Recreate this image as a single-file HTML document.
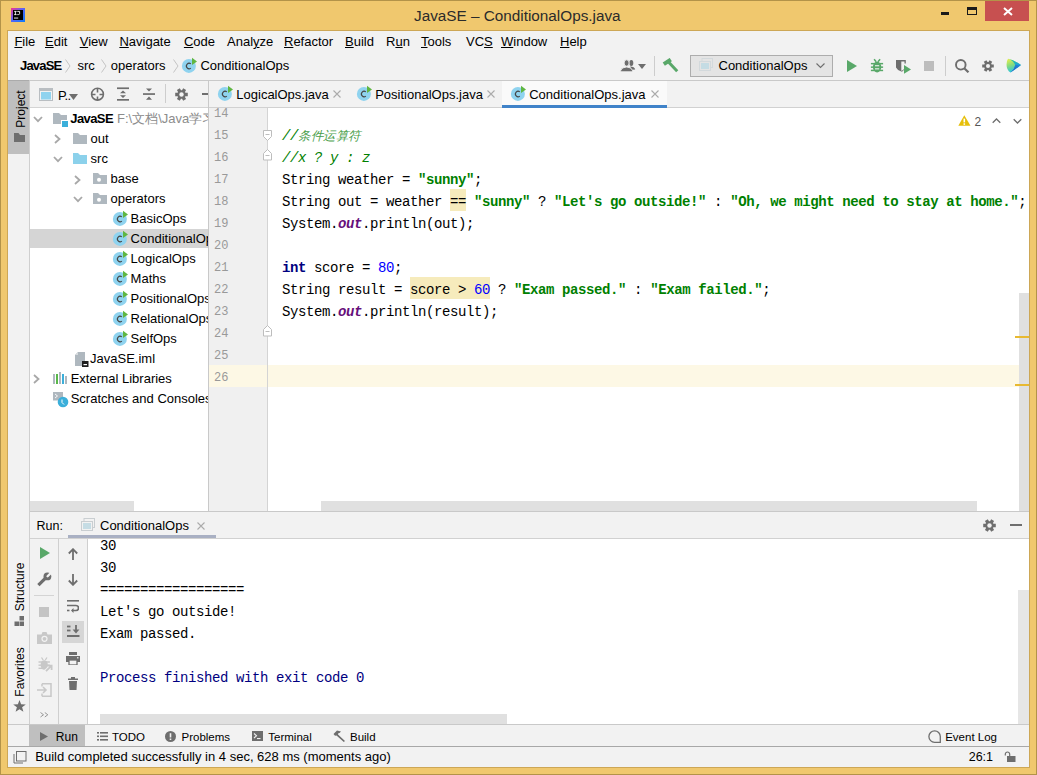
<!DOCTYPE html>
<html><head><meta charset="utf-8"><title>JavaSE – ConditionalOps.java</title>
<style>
html,body{margin:0;padding:0;}
body{width:1037px;height:775px;position:relative;overflow:hidden;font-family:'Liberation Sans', sans-serif;}
.a{position:absolute;}
.t{white-space:pre;}
u{text-decoration:underline;text-underline-offset:1px;}
</style></head><body>
<div class="a" style="left:0;top:0;width:1037px;height:775px;background:#F0C86E;"></div>
<div class="a" style="left:0px;top:0px;width:1037px;height:1px;background:#B39349"></div>
<div class="a" style="left:0px;top:0px;width:1px;height:775px;background:#B39349"></div>
<div class="a" style="left:1036px;top:0px;width:1px;height:775px;background:#B39349"></div>
<div class="a" style="left:0px;top:774px;width:1037px;height:1px;background:#B39349"></div>
<div class="a" style="left:7px;top:30px;width:1023px;height:738px;border:1px solid #CDA756;box-sizing:border-box"></div>
<div class="a" style="left:8px;top:31px;width:1021px;height:736px;background:#F2F2F2"></div>
<svg class="a" style="left:11px;top:8px;" width="14" height="14" viewBox="0 0 14 14"><defs><linearGradient id="ijg" x1="0" y1="0" x2="1" y2="1">
<stop offset="0" stop-color="#FC318C"/><stop offset="0.45" stop-color="#5A63F5"/><stop offset="1" stop-color="#087CFA"/></linearGradient></defs>
<rect x="0" y="0" width="14" height="14" fill="url(#ijg)"/><rect x="2" y="2" width="10" height="10" fill="#000"/>
<path d="M3.2 3.4 H5.6 M4.4 3.4 V6.6 M3.2 6.6 H5.6" stroke="#fff" stroke-width="0.9" fill="none"/>
<path d="M6.3 3.4 H8.6 V5.6 Q8.6 6.6 7.4 6.6 H6.3" stroke="#fff" stroke-width="0.9" fill="none"/>
<rect x="3" y="9.6" width="4.2" height="0.9" fill="#fff"/></svg>
<div class="a t" style="left:414px;top:5.50px;font-size:15.3px;line-height:20px;color:#2B2B2B;font-weight:400;font-family:'Liberation Sans', sans-serif;">JavaSE – ConditionalOps.java</div>
<div class="a" style="left:941px;top:12px;width:8px;height:3px;background:#1A1A1A"></div>
<div class="a" style="left:967px;top:7px;width:10px;height:8px;border:1px solid #1A1A1A;border-top:3px solid #1A1A1A;box-sizing:border-box"></div>
<div class="a" style="left:985px;top:1px;width:44px;height:20px;background:#C75050"></div>
<svg class="a" style="left:1003px;top:7px;" width="10" height="9" viewBox="0 0 10 9"><path d="M1 1 L9 8 M9 1 L1 8" stroke="#fff" stroke-width="2"/></svg>
<div class="a t" style="left:14.4px;top:32.00px;font-size:13px;line-height:20px;color:#000;font-weight:400;font-family:'Liberation Sans', sans-serif;"><u>F</u>ile</div>
<div class="a t" style="left:45px;top:32.00px;font-size:13px;line-height:20px;color:#000;font-weight:400;font-family:'Liberation Sans', sans-serif;"><u>E</u>dit</div>
<div class="a t" style="left:79.7px;top:32.00px;font-size:13px;line-height:20px;color:#000;font-weight:400;font-family:'Liberation Sans', sans-serif;"><u>V</u>iew</div>
<div class="a t" style="left:119.4px;top:32.00px;font-size:13px;line-height:20px;color:#000;font-weight:400;font-family:'Liberation Sans', sans-serif;"><u>N</u>avigate</div>
<div class="a t" style="left:183.9px;top:32.00px;font-size:13px;line-height:20px;color:#000;font-weight:400;font-family:'Liberation Sans', sans-serif;"><u>C</u>ode</div>
<div class="a t" style="left:227px;top:32.00px;font-size:13px;line-height:20px;color:#000;font-weight:400;font-family:'Liberation Sans', sans-serif;">Anal<u>y</u>ze</div>
<div class="a t" style="left:284px;top:32.00px;font-size:13px;line-height:20px;color:#000;font-weight:400;font-family:'Liberation Sans', sans-serif;"><u>R</u>efactor</div>
<div class="a t" style="left:345px;top:32.00px;font-size:13px;line-height:20px;color:#000;font-weight:400;font-family:'Liberation Sans', sans-serif;"><u>B</u>uild</div>
<div class="a t" style="left:386px;top:32.00px;font-size:13px;line-height:20px;color:#000;font-weight:400;font-family:'Liberation Sans', sans-serif;">R<u>u</u>n</div>
<div class="a t" style="left:421px;top:32.00px;font-size:13px;line-height:20px;color:#000;font-weight:400;font-family:'Liberation Sans', sans-serif;"><u>T</u>ools</div>
<div class="a t" style="left:466px;top:32.00px;font-size:13px;line-height:20px;color:#000;font-weight:400;font-family:'Liberation Sans', sans-serif;">VC<u>S</u></div>
<div class="a t" style="left:501px;top:32.00px;font-size:13px;line-height:20px;color:#000;font-weight:400;font-family:'Liberation Sans', sans-serif;"><u>W</u>indow</div>
<div class="a t" style="left:560px;top:32.00px;font-size:13px;line-height:20px;color:#000;font-weight:400;font-family:'Liberation Sans', sans-serif;"><u>H</u>elp</div>
<div class="a t" style="left:20px;top:56.00px;font-size:13px;line-height:20px;color:#000;font-weight:700;font-family:'Liberation Sans', sans-serif;letter-spacing:-0.8px">JavaSE</div>
<svg class="a" style="left:65px;top:59px;" width="6" height="14" viewBox="0 0 6 14"><path d="M0.5 0.5 L5 7.0 L0.5 13.5" stroke="#C4C4C4" stroke-width="1" fill="none"/></svg>
<div class="a t" style="left:77.4px;top:56.00px;font-size:13px;line-height:20px;color:#000;font-weight:400;font-family:'Liberation Sans', sans-serif;">src</div>
<svg class="a" style="left:101px;top:59px;" width="6" height="14" viewBox="0 0 6 14"><path d="M0.5 0.5 L5 7.0 L0.5 13.5" stroke="#C4C4C4" stroke-width="1" fill="none"/></svg>
<div class="a t" style="left:110.7px;top:56.00px;font-size:13px;line-height:20px;color:#000;font-weight:400;font-family:'Liberation Sans', sans-serif;">operators</div>
<svg class="a" style="left:173px;top:59px;" width="6" height="14" viewBox="0 0 6 14"><path d="M0.5 0.5 L5 7.0 L0.5 13.5" stroke="#C4C4C4" stroke-width="1" fill="none"/></svg>
<svg class="a" style="left:181px;top:57px;" width="16" height="16" viewBox="0 0 16 16"><circle cx="7.9" cy="8.9" r="7" fill="#8FD3EF"/>
<path d="M9.8 6.9 A2.65 2.75 0 1 0 9.8 11.1" stroke="#454545" stroke-width="1.15" fill="none"/>
<path d="M11 0.8 L16 4.4 L11 8 Z" fill="#5FB642"/></svg>
<div class="a t" style="left:200.4px;top:56.00px;font-size:13px;line-height:20px;color:#000;font-weight:400;font-family:'Liberation Sans', sans-serif;">ConditionalOps</div>
<svg class="a" style="left:620px;top:59px;" width="16" height="13" viewBox="0 0 16 13"><ellipse cx="11.3" cy="3.9" rx="2" ry="3" fill="#6E6E6E"/><path d="M10 7.6 Q14.6 7.6 15.2 10.6 L12 10.8 Z" fill="#6E6E6E"/>
<ellipse cx="6.6" cy="4" rx="2.5" ry="3.2" fill="#6E6E6E" stroke="#F2F2F2" stroke-width="0.9"/><path d="M0.6 12.8 L0.8 11.2 Q1.8 8.2 6.6 8 Q11.4 8.2 12.4 11.2 L12.6 12.8 Z" fill="#6E6E6E" stroke="#F2F2F2" stroke-width="0.9"/></svg>
<svg class="a" style="left:638px;top:64px;" width="8" height="5" viewBox="0 0 8 5"><path d="M0 0 H8 L4 5 Z" fill="#6E6E6E"/></svg>
<div class="a" style="left:654px;top:56px;width:1px;height:20px;background:#CDCDCD"></div>
<svg class="a" style="left:662px;top:58px;" width="17" height="15" viewBox="0 0 17 15"><path d="M1.8 6.2 L8.8 1.6" stroke="#59A869" stroke-width="4"/><path d="M6.3 3.8 L15.2 13.2" stroke="#59A869" stroke-width="3"/></svg>
<div class="a" style="left:690px;top:55px;width:143px;height:22px;background:#E4E4E4;border:1px solid #ADADAD;box-sizing:border-box"></div>
<svg class="a" style="left:699px;top:58px;" width="14" height="13" viewBox="0 0 14 13"><rect x="3" y="0.5" width="10.5" height="9" fill="none" stroke="#D3D9DC" stroke-width="1"/><rect x="0.5" y="3.5" width="11" height="9" fill="#E4E4E4" stroke="#D3D9DC" stroke-width="1"/><rect x="2" y="5" width="8" height="6" fill="#C5DCE4"/></svg>
<div class="a t" style="left:718.5px;top:55.60px;font-size:13px;line-height:20px;color:#000;font-weight:400;font-family:'Liberation Sans', sans-serif;">ConditionalOps</div>
<svg class="a" style="left:816px;top:63px;" width="9" height="6" viewBox="0 0 9 6"><path d="M0.5 0.5 L4.5 4.5 L8.5 0.5" stroke="#6E6E6E" stroke-width="1.1" fill="none"/></svg>
<svg class="a" style="left:847px;top:60px;" width="10" height="12" viewBox="0 0 10 12"><path d="M0 0 L10 6 L0 12 Z" fill="#59A869"/></svg>
<svg class="a" style="left:870px;top:58px;" width="14" height="15" viewBox="0 0 14 15"><g fill="#59A869"><ellipse cx="7.1" cy="9" rx="4.2" ry="5.4"/>
<rect x="0.9" y="4.9" width="12.2" height="1.5"/><rect x="0.9" y="8.4" width="12.2" height="1.5"/><rect x="0.9" y="11.7" width="12.2" height="1.5"/></g>
<path d="M4.1 1.2 L6.2 3.8 M10.1 1.2 L8 3.8" stroke="#59A869" stroke-width="1.5"/>
<rect x="5" y="7.2" width="4.2" height="1.1" fill="#F2F2F2"/><rect x="5" y="10.3" width="4.2" height="1.1" fill="#F2F2F2"/></svg>
<svg class="a" style="left:895px;top:59px;" width="17" height="15" viewBox="0 0 17 15"><path d="M1 1 H10.8 V4.5 H9.5 V2.6 H6.3 V12.5 Q2.5 11.5 1 8.5 Z" fill="#6E6E6E"/>
<path d="M6.3 12.2 Q8.2 12.2 8.6 10.5" stroke="#6E6E6E" stroke-width="1" fill="none"/>
<path d="M9 6 L16 10.4 L9 14.8 Z" fill="#59A869"/></svg>
<div class="a" style="left:924px;top:61px;width:10px;height:10px;background:#BDBDBD"></div>
<div class="a" style="left:945px;top:56px;width:1px;height:20px;background:#CDCDCD"></div>
<svg class="a" style="left:955px;top:59px;" width="15" height="14" viewBox="0 0 15 14"><circle cx="5.8" cy="5.8" r="4.8" stroke="#6E6E6E" stroke-width="1.9" fill="none"/><path d="M9.2 9.2 L13.5 13.3" stroke="#6E6E6E" stroke-width="2.2"/></svg>
<svg class="a" style="left:982px;top:60px;" width="12" height="12" viewBox="0 0 12 12"><path d="M11.80 4.46 L11.80 7.54 L9.65 7.54 L9.16 8.39 L10.23 10.25 L7.56 11.79 L6.49 9.93 L5.51 9.93 L4.44 11.79 L1.77 10.25 L2.84 8.39 L2.35 7.54 L0.20 7.54 L0.20 4.46 L2.35 4.46 L2.84 3.61 L1.77 1.75 L4.44 0.21 L5.51 2.07 L6.49 2.07 L7.56 0.21 L10.23 1.75 L9.16 3.61 L9.65 4.46 Z" fill="#6E6E6E"/><circle cx="6.0" cy="6.0" r="2.04" fill="#F2F2F2"/></svg>
<svg class="a" style="left:1006px;top:58px;" width="16" height="15" viewBox="0 0 16 15"><defs><linearGradient id="tbA" x1="0" y1="0" x2="0.4" y2="1"><stop offset="0" stop-color="#F3F045"/><stop offset="0.5" stop-color="#86DB7E"/><stop offset="1" stop-color="#1FC2EA"/></linearGradient>
<linearGradient id="tbB" x1="0" y1="0" x2="1" y2="0.6"><stop offset="0" stop-color="#22D88F"/><stop offset="1" stop-color="#1D9FD8"/></linearGradient>
<linearGradient id="tbC" x1="1" y1="0" x2="0" y2="1"><stop offset="0" stop-color="#1F8BDB"/><stop offset="1" stop-color="#2354C4"/></linearGradient></defs>
<path d="M2 0.8 Q8 1.8 15 7 Q9.5 11.5 4.5 14.5 Q0.2 12 0.6 6 Q0.8 2.5 2 0.8 Z" fill="url(#tbA)"/>
<path d="M2 0.8 Q8 1.8 15 7 L9.2 7 Q7.5 2.6 2 0.8 Z" fill="url(#tbB)"/>
<path d="M9.2 7 L15 7 Q9.5 11.5 4.5 14.5 Q8.6 11 9.2 7 Z" fill="url(#tbC)"/></svg>
<div class="a" style="left:8px;top:80px;width:1021px;height:1px;background:#C9C9C9"></div>
<div class="a" style="left:8px;top:81px;width:21px;height:665px;background:#F2F2F2"></div>
<div class="a" style="left:29px;top:81px;width:1px;height:665px;background:#CFCFCF"></div>
<div class="a" style="left:8px;top:81px;width:21px;height:73px;background:#BFBFBF"></div>
<div class="a t" style="left:21px;top:108.5px;font-size:12px;line-height:14px;color:#000;font-family:'Liberation Sans', sans-serif;transform:translate(-50%,-50%) rotate(-90deg);">Project</div>
<div class="a" style="left:8px;top:80px;width:21px;height:1px;background:#ABABAB"></div>
<svg class="a" style="left:14px;top:133px;" width="11" height="9" viewBox="0 0 11 9"><path d="M0 0 H4.5 L6 2 H11 V9 H0 Z" fill="#6E6E6E"/></svg>
<div class="a" style="left:30px;top:81px;width:178px;height:26px;background:#F2F2F2"></div>
<div class="a" style="left:30px;top:107px;width:178px;height:1px;background:#D4D4D4"></div>
<div class="a" style="left:30px;top:108px;width:178px;height:403px;background:#FFFFFF"></div>
<div class="a" style="left:208px;top:81px;width:1px;height:430px;background:#C9C9C9"></div>
<svg class="a" style="left:39px;top:88px;" width="14" height="13" viewBox="0 0 14 13"><rect x="0.5" y="0.5" width="13" height="12" fill="#F2F2F2" stroke="#B9BEC2" stroke-width="1"/><rect x="0.5" y="0.5" width="13" height="2.5" fill="#B9BEC2"/><rect x="2" y="4" width="10" height="7.5" fill="#8FD3EF"/></svg>
<div class="a t" style="left:58px;top:85.50px;font-size:13px;line-height:20px;color:#000;font-weight:400;font-family:'Liberation Sans', sans-serif;letter-spacing:-0.5px">P..</div>
<svg class="a" style="left:69px;top:94px;" width="9" height="6" viewBox="0 0 9 6"><path d="M0 0 H9 L4.5 6 Z" fill="#6E6E6E"/></svg>
<svg class="a" style="left:90px;top:87px;" width="15" height="15" viewBox="0 0 15 15"><circle cx="7.5" cy="7.2" r="5.9" stroke="#6E6E6E" stroke-width="1.6" fill="none"/><path d="M7.5 1.5 V5.5 M7.5 9.5 V13.5 M1.5 7.5 H5.5 M9.5 7.5 H13.5" stroke="#6E6E6E" stroke-width="1.6"/></svg>
<svg class="a" style="left:116px;top:87px;" width="14" height="15" viewBox="0 0 14 15"><rect x="1" y="0.4" width="12" height="1.7" fill="#6E6E6E"/><rect x="1" y="12" width="12" height="1.7" fill="#6E6E6E"/><path d="M4 6.2 L7 3.4 L10 6.2 Z M4 8.2 L7 11 L10 8.2 Z" fill="#6E6E6E"/></svg>
<svg class="a" style="left:142px;top:87px;" width="14" height="15" viewBox="0 0 14 15"><rect x="1" y="6.2" width="12" height="1.7" fill="#6E6E6E"/><path d="M4 1.4 L7 4.6 L10 1.4 Z M4 12.8 L7 9.6 L10 12.8 Z" fill="#6E6E6E"/></svg>
<div class="a" style="left:165px;top:84px;width:1px;height:19px;background:#CDCDCD"></div>
<svg class="a" style="left:175px;top:88px;" width="13" height="13" viewBox="0 0 13 13"><path d="M12.78 4.83 L12.78 8.17 L10.45 8.17 L9.92 9.09 L11.09 11.10 L8.19 12.78 L7.03 10.76 L5.97 10.76 L4.81 12.78 L1.91 11.10 L3.08 9.09 L2.55 8.17 L0.22 8.17 L0.22 4.83 L2.55 4.83 L3.08 3.91 L1.91 1.90 L4.81 0.22 L5.97 2.24 L7.03 2.24 L8.19 0.22 L11.09 1.90 L9.92 3.91 L10.45 4.83 Z" fill="#6E6E6E"/><circle cx="6.5" cy="6.5" r="2.21" fill="#F2F2F2"/></svg>
<div class="a" style="left:202px;top:93px;width:6px;height:2px;background:#6E6E6E"></div>
<div class="a" style="left:30px;top:108px;width:178px;height:403px;overflow:hidden;background:#FFFFFF">
<div class="a" style="left:0px;top:121px;width:178px;height:19px;background:#D5D5D5"></div>
<svg class="a" style="left:3px;top:8px;" width="10" height="7" viewBox="0 0 10 7"><path d="M1 1 L5 5.2 L9 1" stroke="#A8A8A8" stroke-width="1.8" fill="none"/></svg>
<svg class="a" style="left:23px;top:5px;" width="16" height="14" viewBox="0 0 16 14"><path d="M0 0 H6 L8 2 H14 V11 H0 Z" fill="#AFB8BF"/><rect x="8" y="7" width="8" height="7" fill="#FFFFFF"/><rect x="9" y="8" width="6" height="6" fill="#3BAFDA"/></svg>
<div class="a t" style="left:40.3px;top:0.50px;font-size:13px;line-height:20px;color:#000;font-weight:700;font-family:'Liberation Sans', sans-serif;letter-spacing:-0.6px">JavaSE</div>
<div class="a t" style="left:87px;top:0.50px;font-size:13px;line-height:20px;color:#8C8C8C;font-weight:400;font-family:'Liberation Sans', sans-serif;">F:\文档\Java学习</div>
<svg class="a" style="left:24px;top:26px;" width="7" height="10" viewBox="0 0 7 10"><path d="M1 1 L5.5 5 L1 9" stroke="#A8A8A8" stroke-width="1.8" fill="none"/></svg>
<svg class="a" style="left:43px;top:25px;" width="14" height="11" viewBox="0 0 14 11"><path d="M0 0 H5 L7 2 H14 V11 H0 Z" fill="#AFB8BF"/></svg>
<div class="a t" style="left:60.599999999999994px;top:20.50px;font-size:13px;line-height:20px;color:#000;font-weight:400;font-family:'Liberation Sans', sans-serif;">out</div>
<svg class="a" style="left:23px;top:48px;" width="10" height="7" viewBox="0 0 10 7"><path d="M1 1 L5 5.2 L9 1" stroke="#A8A8A8" stroke-width="1.8" fill="none"/></svg>
<svg class="a" style="left:43px;top:45px;" width="14" height="11" viewBox="0 0 14 11"><path d="M0 0 H5 L7 2 H14 V11 H0 Z" fill="#8CD1EB"/></svg>
<div class="a t" style="left:60.599999999999994px;top:40.50px;font-size:13px;line-height:20px;color:#000;font-weight:400;font-family:'Liberation Sans', sans-serif;">src</div>
<svg class="a" style="left:44px;top:67px;" width="7" height="10" viewBox="0 0 7 10"><path d="M1 1 L5.5 5 L1 9" stroke="#A8A8A8" stroke-width="1.8" fill="none"/></svg>
<svg class="a" style="left:63px;top:65px;" width="14" height="11" viewBox="0 0 14 11"><path d="M0 0 H5 L7 2 H14 V11 H0 Z" fill="#AFB8BF"/><circle cx="6" cy="6.8" r="2" fill="#FFFFFF"/></svg>
<div class="a t" style="left:80.6px;top:60.50px;font-size:13px;line-height:20px;color:#000;font-weight:400;font-family:'Liberation Sans', sans-serif;">base</div>
<svg class="a" style="left:43px;top:88px;" width="10" height="7" viewBox="0 0 10 7"><path d="M1 1 L5 5.2 L9 1" stroke="#A8A8A8" stroke-width="1.8" fill="none"/></svg>
<svg class="a" style="left:63px;top:85px;" width="14" height="11" viewBox="0 0 14 11"><path d="M0 0 H5 L7 2 H14 V11 H0 Z" fill="#AFB8BF"/><circle cx="6" cy="6.8" r="2" fill="#FFFFFF"/></svg>
<div class="a t" style="left:80.6px;top:80.50px;font-size:13px;line-height:20px;color:#000;font-weight:400;font-family:'Liberation Sans', sans-serif;">operators</div>
<svg class="a" style="left:82px;top:102px;" width="16" height="16" viewBox="0 0 16 16"><circle cx="7.9" cy="8.9" r="7" fill="#8FD3EF"/>
<path d="M9.8 6.9 A2.65 2.75 0 1 0 9.8 11.1" stroke="#454545" stroke-width="1.15" fill="none"/>
<path d="M11 0.8 L16 4.4 L11 8 Z" fill="#5FB642"/></svg>
<div class="a t" style="left:100.6px;top:100.50px;font-size:13px;line-height:20px;color:#000;font-weight:400;font-family:'Liberation Sans', sans-serif;">BasicOps</div>
<svg class="a" style="left:82px;top:122px;" width="16" height="16" viewBox="0 0 16 16"><circle cx="7.9" cy="8.9" r="7" fill="#8FD3EF"/>
<path d="M9.8 6.9 A2.65 2.75 0 1 0 9.8 11.1" stroke="#454545" stroke-width="1.15" fill="none"/>
<path d="M11 0.8 L16 4.4 L11 8 Z" fill="#5FB642"/></svg>
<div class="a t" style="left:100.6px;top:120.50px;font-size:13px;line-height:20px;color:#000;font-weight:400;font-family:'Liberation Sans', sans-serif;">ConditionalOps</div>
<svg class="a" style="left:82px;top:142px;" width="16" height="16" viewBox="0 0 16 16"><circle cx="7.9" cy="8.9" r="7" fill="#8FD3EF"/>
<path d="M9.8 6.9 A2.65 2.75 0 1 0 9.8 11.1" stroke="#454545" stroke-width="1.15" fill="none"/>
<path d="M11 0.8 L16 4.4 L11 8 Z" fill="#5FB642"/></svg>
<div class="a t" style="left:100.6px;top:140.50px;font-size:13px;line-height:20px;color:#000;font-weight:400;font-family:'Liberation Sans', sans-serif;">LogicalOps</div>
<svg class="a" style="left:82px;top:162px;" width="16" height="16" viewBox="0 0 16 16"><circle cx="7.9" cy="8.9" r="7" fill="#8FD3EF"/>
<path d="M9.8 6.9 A2.65 2.75 0 1 0 9.8 11.1" stroke="#454545" stroke-width="1.15" fill="none"/>
<path d="M11 0.8 L16 4.4 L11 8 Z" fill="#5FB642"/></svg>
<div class="a t" style="left:100.6px;top:160.50px;font-size:13px;line-height:20px;color:#000;font-weight:400;font-family:'Liberation Sans', sans-serif;">Maths</div>
<svg class="a" style="left:82px;top:182px;" width="16" height="16" viewBox="0 0 16 16"><circle cx="7.9" cy="8.9" r="7" fill="#8FD3EF"/>
<path d="M9.8 6.9 A2.65 2.75 0 1 0 9.8 11.1" stroke="#454545" stroke-width="1.15" fill="none"/>
<path d="M11 0.8 L16 4.4 L11 8 Z" fill="#5FB642"/></svg>
<div class="a t" style="left:100.6px;top:180.50px;font-size:13px;line-height:20px;color:#000;font-weight:400;font-family:'Liberation Sans', sans-serif;">PositionalOps</div>
<svg class="a" style="left:82px;top:202px;" width="16" height="16" viewBox="0 0 16 16"><circle cx="7.9" cy="8.9" r="7" fill="#8FD3EF"/>
<path d="M9.8 6.9 A2.65 2.75 0 1 0 9.8 11.1" stroke="#454545" stroke-width="1.15" fill="none"/>
<path d="M11 0.8 L16 4.4 L11 8 Z" fill="#5FB642"/></svg>
<div class="a t" style="left:100.6px;top:200.50px;font-size:13px;line-height:20px;color:#000;font-weight:400;font-family:'Liberation Sans', sans-serif;">RelationalOps</div>
<svg class="a" style="left:82px;top:222px;" width="16" height="16" viewBox="0 0 16 16"><circle cx="7.9" cy="8.9" r="7" fill="#8FD3EF"/>
<path d="M9.8 6.9 A2.65 2.75 0 1 0 9.8 11.1" stroke="#454545" stroke-width="1.15" fill="none"/>
<path d="M11 0.8 L16 4.4 L11 8 Z" fill="#5FB642"/></svg>
<div class="a t" style="left:100.6px;top:220.50px;font-size:13px;line-height:20px;color:#000;font-weight:400;font-family:'Liberation Sans', sans-serif;">SelfOps</div>
<svg class="a" style="left:45px;top:244px;" width="14" height="15" viewBox="0 0 14 15"><path d="M3 0 H10 V9 H7 V14 H0 V3 Z" fill="#AFB8BF"/><path d="M0 3 L3 0 V3 Z" fill="#D6DADD"/><rect x="7" y="9" width="6.5" height="6" fill="#1F1F1F"/><rect x="8.5" y="12" width="3.5" height="1.2" fill="#FFFFFF"/></svg>
<div class="a t" style="left:60px;top:240.50px;font-size:13px;line-height:20px;color:#000;font-weight:400;font-family:'Liberation Sans', sans-serif;">JavaSE.iml</div>
<svg class="a" style="left:3px;top:266px;" width="7" height="10" viewBox="0 0 7 10"><path d="M1 1 L5.5 5 L1 9" stroke="#A8A8A8" stroke-width="1.8" fill="none"/></svg>
<svg class="a" style="left:23px;top:264px;" width="15" height="12" viewBox="0 0 15 12"><rect x="0" y="2" width="2" height="10" fill="#AFB8BF"/><rect x="3" y="2" width="2" height="10" fill="#59B84A"/><rect x="6" y="0" width="2" height="12" fill="#AFB8BF"/><rect x="9" y="2" width="2" height="10" fill="#3BAFDA"/><rect x="12" y="4" width="2" height="8" fill="#AFB8BF"/></svg>
<div class="a t" style="left:40.7px;top:260.50px;font-size:13px;line-height:20px;color:#000;font-weight:400;font-family:'Liberation Sans', sans-serif;">External Libraries</div>
<div class="a t" style="left:40.7px;top:280.50px;font-size:13px;line-height:20px;color:#000;font-weight:400;font-family:'Liberation Sans', sans-serif;">Scratches and Consoles</div>
<svg class="a" style="left:23px;top:284px;" width="16" height="16" viewBox="0 0 16 16"><rect x="0" y="0" width="10" height="8.5" fill="#AFB8BF"/><path d="M2 2 L4.5 4 L2 6" stroke="#fff" stroke-width="0.9" fill="none"/><circle cx="10" cy="10" r="5.3" fill="#3BAFDA"/><path d="M9 7.5 V10.5 L11 12.5" stroke="#fff" stroke-width="1" fill="none"/></svg>
</div>
<div class="a" style="left:209px;top:81px;width:820px;height:26px;background:#F2F2F2"></div>
<div class="a" style="left:209px;top:107px;width:820px;height:1px;background:#D1D1D1"></div>
<div class="a" style="left:502px;top:81px;width:165px;height:26px;background:#FAFAFA"></div>
<div class="a" style="left:502px;top:105px;width:165px;height:3px;background:#4083C9"></div>
<svg class="a" style="left:217px;top:85px;" width="16" height="16" viewBox="0 0 16 16"><circle cx="7.9" cy="8.9" r="7" fill="#8FD3EF"/>
<path d="M9.8 6.9 A2.65 2.75 0 1 0 9.8 11.1" stroke="#454545" stroke-width="1.15" fill="none"/>
<path d="M11 0.8 L16 4.4 L11 8 Z" fill="#5FB642"/></svg>
<div class="a t" style="left:236.3px;top:84.50px;font-size:13px;line-height:20px;color:#000;font-weight:400;font-family:'Liberation Sans', sans-serif;">LogicalOps.java</div>
<svg class="a" style="left:333px;top:90px;" width="8" height="8" viewBox="0 0 8 8"><path d="M0.5 0.5 L7.5 7.5 M7.5 0.5 L0.5 7.5" stroke="#ABABAB" stroke-width="1.1"/></svg>
<svg class="a" style="left:356px;top:85px;" width="16" height="16" viewBox="0 0 16 16"><circle cx="7.9" cy="8.9" r="7" fill="#8FD3EF"/>
<path d="M9.8 6.9 A2.65 2.75 0 1 0 9.8 11.1" stroke="#454545" stroke-width="1.15" fill="none"/>
<path d="M11 0.8 L16 4.4 L11 8 Z" fill="#5FB642"/></svg>
<div class="a t" style="left:375.2px;top:84.50px;font-size:13px;line-height:20px;color:#000;font-weight:400;font-family:'Liberation Sans', sans-serif;">PositionalOps.java</div>
<svg class="a" style="left:487px;top:90px;" width="8" height="8" viewBox="0 0 8 8"><path d="M0.5 0.5 L7.5 7.5 M7.5 0.5 L0.5 7.5" stroke="#ABABAB" stroke-width="1.1"/></svg>
<svg class="a" style="left:510px;top:85px;" width="16" height="16" viewBox="0 0 16 16"><circle cx="7.9" cy="8.9" r="7" fill="#8FD3EF"/>
<path d="M9.8 6.9 A2.65 2.75 0 1 0 9.8 11.1" stroke="#454545" stroke-width="1.15" fill="none"/>
<path d="M11 0.8 L16 4.4 L11 8 Z" fill="#5FB642"/></svg>
<div class="a t" style="left:529.2px;top:84.50px;font-size:13px;line-height:20px;color:#000;font-weight:400;font-family:'Liberation Sans', sans-serif;">ConditionalOps.java</div>
<svg class="a" style="left:651px;top:90px;" width="8" height="8" viewBox="0 0 8 8"><path d="M0.5 0.5 L7.5 7.5 M7.5 0.5 L0.5 7.5" stroke="#ABABAB" stroke-width="1.1"/></svg>
<div class="a" style="left:209px;top:108px;width:58px;height:403px;background:#F0F0F0"></div>
<div class="a" style="left:268px;top:108px;width:761px;height:403px;background:#FFFFFF"></div>
<div class="a" style="left:209px;top:365px;width:810px;height:22px;background:#FDF8E5"></div>
<div class="a" style="left:267px;top:108px;width:1px;height:403px;background:#D4D4D4"></div>
<div class="a" style="left:450px;top:189px;width:16px;height:22px;background:#F6EBBC"></div>
<div class="a" style="left:410px;top:277px;width:80px;height:22px;background:#F6EBBC"></div>
<div class="a t" style="left:214px;top:103.80px;font-size:12px;line-height:20px;color:#999999;font-weight:400;font-family:'Liberation Mono', monospace;">14</div>
<div class="a t" style="left:214px;top:125.80px;font-size:12px;line-height:20px;color:#999999;font-weight:400;font-family:'Liberation Mono', monospace;">15</div>
<div class="a t" style="left:214px;top:147.80px;font-size:12px;line-height:20px;color:#999999;font-weight:400;font-family:'Liberation Mono', monospace;">16</div>
<div class="a t" style="left:214px;top:169.80px;font-size:12px;line-height:20px;color:#999999;font-weight:400;font-family:'Liberation Mono', monospace;">17</div>
<div class="a t" style="left:214px;top:191.80px;font-size:12px;line-height:20px;color:#999999;font-weight:400;font-family:'Liberation Mono', monospace;">18</div>
<div class="a t" style="left:214px;top:213.80px;font-size:12px;line-height:20px;color:#999999;font-weight:400;font-family:'Liberation Mono', monospace;">19</div>
<div class="a t" style="left:214px;top:235.80px;font-size:12px;line-height:20px;color:#999999;font-weight:400;font-family:'Liberation Mono', monospace;">20</div>
<div class="a t" style="left:214px;top:257.80px;font-size:12px;line-height:20px;color:#999999;font-weight:400;font-family:'Liberation Mono', monospace;">21</div>
<div class="a t" style="left:214px;top:279.80px;font-size:12px;line-height:20px;color:#999999;font-weight:400;font-family:'Liberation Mono', monospace;">22</div>
<div class="a t" style="left:214px;top:301.80px;font-size:12px;line-height:20px;color:#999999;font-weight:400;font-family:'Liberation Mono', monospace;">23</div>
<div class="a t" style="left:214px;top:323.80px;font-size:12px;line-height:20px;color:#999999;font-weight:400;font-family:'Liberation Mono', monospace;">24</div>
<div class="a t" style="left:214px;top:345.80px;font-size:12px;line-height:20px;color:#999999;font-weight:400;font-family:'Liberation Mono', monospace;">25</div>
<div class="a t" style="left:214px;top:367.80px;font-size:12px;line-height:20px;color:#999999;font-weight:400;font-family:'Liberation Mono', monospace;">26</div>
<svg class="a" style="left:263px;top:130px;" width="10" height="12" viewBox="0 0 10 12"><path d="M0.5 0.5 H8.5 V6.5 L4.5 10.5 L0.5 6.5 Z" fill="#FFFFFF" stroke="#BDBDBD" stroke-width="1"/><path d="M2.5 4.5 H6.5" stroke="#BDBDBD" stroke-width="1"/></svg>
<svg class="a" style="left:263px;top:149px;" width="10" height="12" viewBox="0 0 10 12"><path d="M0.5 11 H8.5 V4.5 L4.5 0.5 L0.5 4.5 Z" fill="#FFFFFF" stroke="#BDBDBD" stroke-width="1"/><path d="M2.5 6.5 H6.5" stroke="#BDBDBD" stroke-width="1"/></svg>
<svg class="a" style="left:263px;top:325px;" width="10" height="12" viewBox="0 0 10 12"><path d="M0.5 11 H8.5 V4.5 L4.5 0.5 L0.5 4.5 Z" fill="#FFFFFF" stroke="#BDBDBD" stroke-width="1"/><path d="M2.5 6.5 H6.5" stroke="#BDBDBD" stroke-width="1"/></svg>
<div class="a" style="left:268px;top:108px;width:761px;height:403px;overflow:hidden;">
<div class="a t" style="left:14px;top:17.77px;font-size:14px;line-height:20px;color:#000000;font-weight:400;font-family:'Liberation Mono', monospace;letter-spacing:-0.4px"><span style="color:#008000;font-style:italic">//</span><span style="color:#4A9E4A;font-style:italic;font-size:12.5px">条件运算符</span></div>
<div class="a t" style="left:14px;top:39.77px;font-size:14px;line-height:20px;color:#000000;font-weight:400;font-family:'Liberation Mono', monospace;letter-spacing:-0.4px"><span style="color:#008000;font-style:italic">//x ? y : z</span></div>
<div class="a t" style="left:14px;top:61.77px;font-size:14px;line-height:20px;color:#000000;font-weight:400;font-family:'Liberation Mono', monospace;letter-spacing:-0.4px">String weather = <span style="color:#008000;font-weight:700">&quot;sunny&quot;</span>;</div>
<div class="a t" style="left:14px;top:83.77px;font-size:14px;line-height:20px;color:#000000;font-weight:400;font-family:'Liberation Mono', monospace;letter-spacing:-0.4px">String out = weather == <span style="color:#008000;font-weight:700">&quot;sunny&quot;</span> ? <span style="color:#008000;font-weight:700">&quot;Let&#x27;s go outside!&quot;</span> : <span style="color:#008000;font-weight:700">&quot;Oh, we might need to stay at home.&quot;</span>;</div>
<div class="a t" style="left:14px;top:105.77px;font-size:14px;line-height:20px;color:#000000;font-weight:400;font-family:'Liberation Mono', monospace;letter-spacing:-0.4px">System.<span style="color:#660E7A;font-style:italic;font-weight:700">out</span>.println(out);</div>
<div class="a t" style="left:14px;top:149.77px;font-size:14px;line-height:20px;color:#000000;font-weight:400;font-family:'Liberation Mono', monospace;letter-spacing:-0.4px"><span style="color:#000080;font-weight:700">int</span> score = <span style="color:#0000FF">80</span>;</div>
<div class="a t" style="left:14px;top:171.77px;font-size:14px;line-height:20px;color:#000000;font-weight:400;font-family:'Liberation Mono', monospace;letter-spacing:-0.4px">String result = score &gt; <span style="color:#0000FF">60</span> ? <span style="color:#008000;font-weight:700">&quot;Exam passed.&quot;</span> : <span style="color:#008000;font-weight:700">&quot;Exam failed.&quot;</span>;</div>
<div class="a t" style="left:14px;top:193.77px;font-size:14px;line-height:20px;color:#000000;font-weight:400;font-family:'Liberation Mono', monospace;letter-spacing:-0.4px">System.<span style="color:#660E7A;font-style:italic;font-weight:700">out</span>.println(result);</div>
</div>
<svg class="a" style="left:958px;top:115px;" width="13" height="11" viewBox="0 0 13 11"><path d="M6.3 0.3 L12.5 10.8 H0.3 Z" fill="#E6BF0A"/><rect x="5.5" y="3.6" width="1.6" height="3.8" fill="#FFFFFF"/><rect x="5.5" y="8.3" width="1.6" height="1.5" fill="#FFFFFF"/></svg>
<div class="a t" style="left:974.5px;top:111.84px;font-size:12px;line-height:20px;color:#555555;font-weight:400;font-family:'Liberation Sans', sans-serif;">2</div>
<svg class="a" style="left:992px;top:117px;" width="9" height="7" viewBox="0 0 9 7"><path d="M0.7 5.8 L4.5 2 L8.3 5.8" stroke="#6E6E6E" stroke-width="1.3" fill="none"/></svg>
<svg class="a" style="left:1013px;top:118px;" width="9" height="7" viewBox="0 0 9 7"><path d="M0.7 1.2 L4.5 5 L8.3 1.2" stroke="#6E6E6E" stroke-width="1.3" fill="none"/></svg>
<div class="a" style="left:1019px;top:293px;width:10px;height:218px;background:#E0E0E0"></div>
<div class="a" style="left:1015px;top:336px;width:14px;height:2px;background:#E8B931"></div>
<div class="a" style="left:1015px;top:384px;width:14px;height:2px;background:#E8B931"></div>
<div class="a" style="left:321px;top:501px;width:656px;height:10px;background:#E0E0E0"></div>
<div class="a" style="left:30px;top:501px;width:104px;height:10px;background:#E0E0E0"></div>
<div class="a" style="left:30px;top:511px;width:999px;height:1px;background:#C9C9C9"></div>
<div class="a t" style="left:20px;top:586.5px;font-size:12px;line-height:14px;color:#000;font-family:'Liberation Sans', sans-serif;transform:translate(-50%,-50%) rotate(-90deg);">Structure</div>
<svg class="a" style="left:14px;top:616px;" width="11" height="10" viewBox="0 0 11 10"><rect x="5.5" y="0" width="4.5" height="4.5" fill="#6E6E6E"/><rect x="0.5" y="5.5" width="4.5" height="4.5" fill="#6E6E6E"/><rect x="5.5" y="5.5" width="4.5" height="4.5" fill="#6E6E6E"/></svg>
<div class="a t" style="left:20px;top:672px;font-size:12px;line-height:14px;color:#000;font-family:'Liberation Sans', sans-serif;transform:translate(-50%,-50%) rotate(-90deg);">Favorites</div>
<svg class="a" style="left:13px;top:700px;" width="13" height="12" viewBox="0 0 13 12"><path d="M6.5 0 L8.1 4.3 L12.8 4.5 L9.1 7.3 L10.4 11.8 L6.5 9.2 L2.6 11.8 L3.9 7.3 L0.2 4.5 L4.9 4.3 Z" fill="#6E6E6E"/></svg>
<div class="a" style="left:30px;top:512px;width:999px;height:26px;background:#F2F2F2"></div>
<div class="a" style="left:30px;top:538px;width:999px;height:1px;background:#D1D1D1"></div>
<div class="a t" style="left:36.5px;top:516.17px;font-size:12.5px;line-height:20px;color:#000;font-weight:400;font-family:'Liberation Sans', sans-serif;">Run:</div>
<svg class="a" style="left:81px;top:518px;" width="14" height="13" viewBox="0 0 14 13"><rect x="3" y="0.5" width="10.5" height="9" fill="none" stroke="#C9CED1" stroke-width="1"/><rect x="0.5" y="3.5" width="11" height="9" fill="#F2F2F2" stroke="#C9CED1" stroke-width="1"/><rect x="2" y="5" width="8" height="6" fill="#C5DCE4"/></svg>
<div class="a t" style="left:100px;top:515.80px;font-size:13px;line-height:20px;color:#000;font-weight:400;font-family:'Liberation Sans', sans-serif;">ConditionalOps</div>
<svg class="a" style="left:197px;top:522px;" width="8" height="8" viewBox="0 0 8 8"><path d="M0.5 0.5 L7.5 7.5 M7.5 0.5 L0.5 7.5" stroke="#ABABAB" stroke-width="1.1"/></svg>
<div class="a" style="left:68px;top:535px;width:148px;height:3px;background:#A9B0C3"></div>
<svg class="a" style="left:983px;top:519px;" width="13" height="13" viewBox="0 0 13 13"><path d="M12.78 4.83 L12.78 8.17 L10.45 8.17 L9.92 9.09 L11.09 11.10 L8.19 12.78 L7.03 10.76 L5.97 10.76 L4.81 12.78 L1.91 11.10 L3.08 9.09 L2.55 8.17 L0.22 8.17 L0.22 4.83 L2.55 4.83 L3.08 3.91 L1.91 1.90 L4.81 0.22 L5.97 2.24 L7.03 2.24 L8.19 0.22 L11.09 1.90 L9.92 3.91 L10.45 4.83 Z" fill="#6E6E6E"/><circle cx="6.5" cy="6.5" r="2.21" fill="#F2F2F2"/></svg>
<div class="a" style="left:1010px;top:524px;width:12px;height:2px;background:#6E6E6E"></div>
<div class="a" style="left:30px;top:539px;width:28px;height:185px;background:#F2F2F2"></div>
<div class="a" style="left:58px;top:539px;width:1px;height:185px;background:#CFCFCF"></div>
<div class="a" style="left:59px;top:539px;width:28px;height:185px;background:#F2F2F2"></div>
<div class="a" style="left:87px;top:539px;width:1px;height:185px;background:#CFCFCF"></div>
<div class="a" style="left:88px;top:539px;width:941px;height:185px;background:#FFFFFF"></div>
<svg class="a" style="left:40px;top:547px;" width="10" height="12" viewBox="0 0 10 12"><path d="M0 0 L10 6 L0 12 Z" fill="#59A869"/></svg>
<svg class="a" style="left:37px;top:572px;" width="15" height="15" viewBox="0 0 15 15"><path d="M1.4 13.2 L8 6.6" stroke="#6E6E6E" stroke-width="3.2"/><circle cx="10.4" cy="4.4" r="3.9" fill="#6E6E6E"/><path d="M10.6 4.2 L15 -0.2" stroke="#F2F2F2" stroke-width="2.3" stroke-linecap="round"/></svg>
<div class="a" style="left:34px;top:595px;width:20px;height:1px;background:#D4D4D4"></div>
<div class="a" style="left:39px;top:607px;width:10px;height:10px;background:#C4C4C4"></div>
<svg class="a" style="left:37px;top:632px;" width="15" height="12" viewBox="0 0 15 12"><path d="M0 2.5 H4.5 L5.5 0 H9.5 L10.5 2.5 H15 V12 H0 Z" fill="#C8C8C8"/><circle cx="7.5" cy="6.8" r="3.1" fill="#F2F2F2"/><circle cx="7.5" cy="6.8" r="1.9" fill="#C8C8C8"/></svg>
<svg class="a" style="left:38px;top:657px;" width="15" height="15" viewBox="0 0 15 15"><g fill="#C8C8C8"><ellipse cx="6.2" cy="8" rx="3.6" ry="4.8"/><rect x="0.5" y="4.3" width="11.4" height="1.4"/><rect x="0.5" y="7.5" width="11.4" height="1.4"/><rect x="0.5" y="10.6" width="11.4" height="1.4"/></g><path d="M3.5 0.5 L5.2 3 M9 0.5 L7.3 3" stroke="#C8C8C8" stroke-width="1.3"/><path d="M7.5 14.5 L13.2 8.8" stroke="#F2F2F2" stroke-width="3.5"/><path d="M8 14.2 L13 9.2 M9.2 8.6 H13.6 V13" stroke="#C8C8C8" stroke-width="1.8" fill="none"/></svg>
<svg class="a" style="left:37px;top:683px;" width="15" height="14" viewBox="0 0 15 14"><path d="M5 0.75 H14 V13.25 H5 M5 0.75 V3.5 M5 10.5 V13.25" stroke="#C8C8C8" stroke-width="1.5" fill="none"/><path d="M0 7 H8.5 M6 4 L9 7 L6 10" stroke="#C8C8C8" stroke-width="1.6" fill="none"/></svg>
<svg class="a" style="left:40px;top:712px;" width="9" height="6" viewBox="0 0 9 6"><path d="M0.5 0.5 L3.5 2.75 L0.5 5 M4.8 0.5 L7.8 2.75 L4.8 5" stroke="#8C8C8C" stroke-width="0.9" fill="none"/></svg>
<svg class="a" style="left:68px;top:548px;" width="10" height="12" viewBox="0 0 10 12"><path d="M5 12 V1.5 M0.8 5.5 L5 1.2 L9.2 5.5" stroke="#6E6E6E" stroke-width="1.8" fill="none"/></svg>
<svg class="a" style="left:68px;top:574px;" width="10" height="12" viewBox="0 0 10 12"><path d="M5 0 V10.5 M0.8 6.5 L5 10.8 L9.2 6.5" stroke="#6E6E6E" stroke-width="1.8" fill="none"/></svg>
<svg class="a" style="left:67px;top:600px;" width="12" height="13" viewBox="0 0 12 13"><rect x="0" y="0" width="12" height="1.6" fill="#6E6E6E"/><path d="M0 5.5 H9 Q11.5 5.5 11.5 8 Q11.5 10.5 9 10.5 H5" stroke="#6E6E6E" stroke-width="1.6" fill="none"/><path d="M6.5 8 L4 10.5 L6.5 13 Z" fill="#6E6E6E"/><rect x="0" y="9.7" width="2.5" height="1.6" fill="#6E6E6E"/></svg>
<div class="a" style="left:62px;top:621px;width:22px;height:22px;background:#D6D6D6"></div>
<svg class="a" style="left:67px;top:625px;" width="13" height="12" viewBox="0 0 13 12"><rect x="0" y="0.6" width="3.5" height="1.8" fill="#6E6E6E"/><rect x="0" y="4.6" width="3.5" height="1.8" fill="#6E6E6E"/><rect x="0" y="10" width="12.5" height="2" fill="#6E6E6E"/><path d="M9 0 V5" stroke="#6E6E6E" stroke-width="1.8"/><path d="M5.6 4.6 L9 8.6 L12.4 4.6 Z" fill="#6E6E6E"/></svg>
<svg class="a" style="left:66px;top:652px;" width="14" height="13" viewBox="0 0 14 13"><rect x="3" y="0" width="8" height="3" fill="#6E6E6E"/><rect x="0" y="4" width="14" height="6" fill="#6E6E6E"/><rect x="3" y="8" width="8" height="5" fill="#F2F2F2" stroke="#6E6E6E" stroke-width="1.3"/><rect x="11" y="5.2" width="1.5" height="1.2" fill="#F2F2F2"/></svg>
<svg class="a" style="left:68px;top:677px;" width="10" height="13" viewBox="0 0 10 13"><rect x="0" y="1.5" width="10" height="1.5" fill="#6E6E6E"/><rect x="3" y="0" width="4" height="2" fill="#6E6E6E"/><path d="M1 4 H9 L8.5 13 H1.5 Z" fill="#6E6E6E"/></svg>
<div class="a" style="left:88px;top:539px;width:930px;height:185px;overflow:hidden;">
<div class="a t" style="left:12px;top:-2.73px;font-size:14px;line-height:20px;color:#000000;font-weight:400;font-family:'Liberation Mono', monospace;letter-spacing:-0.4px">30</div>
<div class="a t" style="left:12px;top:19.27px;font-size:14px;line-height:20px;color:#000000;font-weight:400;font-family:'Liberation Mono', monospace;letter-spacing:-0.4px">30</div>
<div class="a t" style="left:12px;top:41.27px;font-size:14px;line-height:20px;color:#000000;font-weight:400;font-family:'Liberation Mono', monospace;letter-spacing:-0.4px">==================</div>
<div class="a t" style="left:12px;top:63.27px;font-size:14px;line-height:20px;color:#000000;font-weight:400;font-family:'Liberation Mono', monospace;letter-spacing:-0.4px">Let&#x27;s go outside!</div>
<div class="a t" style="left:12px;top:85.27px;font-size:14px;line-height:20px;color:#000000;font-weight:400;font-family:'Liberation Mono', monospace;letter-spacing:-0.4px">Exam passed.</div>
<div class="a t" style="left:12px;top:129.27px;font-size:14px;line-height:20px;color:#000080;font-weight:400;font-family:'Liberation Mono', monospace;letter-spacing:-0.4px">Process finished with exit code 0</div>
</div>
<div class="a" style="left:1018px;top:590px;width:11px;height:134px;background:#E6E6E6"></div>
<div class="a" style="left:100px;top:714px;width:407px;height:10px;background:#E0E0E0"></div>
<div class="a" style="left:8px;top:724px;width:1021px;height:1px;background:#C9C9C9"></div>
<div class="a" style="left:8px;top:725px;width:1021px;height:21px;background:#F2F2F2"></div>
<div class="a" style="left:29px;top:725px;width:56px;height:21px;background:#BFBFBF"></div>
<svg class="a" style="left:40px;top:732px;" width="8" height="9" viewBox="0 0 8 9"><path d="M0 0 L8 4.5 L0 9 Z" fill="#6E6E6E"/></svg>
<div class="a t" style="left:55.7px;top:726.84px;font-size:12px;line-height:20px;color:#000;font-weight:400;font-family:'Liberation Sans', sans-serif;letter-spacing:0.1px">Run</div>
<svg class="a" style="left:97px;top:732px;" width="11" height="9" viewBox="0 0 11 9"><g fill="#6E6E6E"><rect x="0" y="0" width="2" height="1.6"/><rect x="3" y="0" width="8" height="1.6"/><rect x="0" y="3.5" width="2" height="1.6"/><rect x="3" y="3.5" width="8" height="1.6"/><rect x="0" y="7" width="2" height="1.6"/><rect x="3" y="7" width="8" height="1.6"/></g></svg>
<div class="a t" style="left:112px;top:727.02px;font-size:11.5px;line-height:20px;color:#000;font-weight:400;font-family:'Liberation Sans', sans-serif;">TODO</div>
<svg class="a" style="left:165px;top:731px;" width="11" height="11" viewBox="0 0 11 11"><circle cx="5.5" cy="5.5" r="5.5" fill="#6E6E6E"/><rect x="4.7" y="2.2" width="1.6" height="4.3" fill="#F2F2F2"/><rect x="4.7" y="7.5" width="1.6" height="1.5" fill="#F2F2F2"/></svg>
<div class="a t" style="left:181.5px;top:727.02px;font-size:11.5px;line-height:20px;color:#000;font-weight:400;font-family:'Liberation Sans', sans-serif;">Problems</div>
<svg class="a" style="left:252px;top:731px;" width="11" height="10" viewBox="0 0 11 10"><rect x="0" y="0" width="11" height="10" fill="#6E6E6E"/><path d="M2 2.5 L4.5 4.8 L2 7" stroke="#F2F2F2" stroke-width="1.1" fill="none"/><rect x="5" y="7" width="3.5" height="1.1" fill="#F2F2F2"/></svg>
<div class="a t" style="left:268.3px;top:727.02px;font-size:11.5px;line-height:20px;color:#000;font-weight:400;font-family:'Liberation Sans', sans-serif;">Terminal</div>
<svg class="a" style="left:333px;top:730px;" width="13" height="12" viewBox="0 0 13 12"><path d="M0.5 4 L4 0.5 L8 1.5 L6.5 3 L5.5 3 L5 4.5 L12 11 L10.8 12 L3.5 5.5 L2 5.8 Z" fill="#6E6E6E"/></svg>
<div class="a t" style="left:350px;top:727.02px;font-size:11.5px;line-height:20px;color:#000;font-weight:400;font-family:'Liberation Sans', sans-serif;">Build</div>
<svg class="a" style="left:928px;top:730px;" width="14" height="14" viewBox="0 0 14 14"><path d="M12.3 12.3 H6.6 A5.7 5.7 0 1 1 12.3 6.6 Z" stroke="#6E6E6E" stroke-width="1.3" fill="none"/></svg>
<div class="a t" style="left:945.2px;top:727.02px;font-size:11.5px;line-height:20px;color:#000;font-weight:400;font-family:'Liberation Sans', sans-serif;">Event Log</div>
<div class="a" style="left:8px;top:746px;width:1021px;height:1px;background:#A8A8A8"></div>
<div class="a" style="left:8px;top:747px;width:1021px;height:20px;background:#F2F2F2"></div>
<svg class="a" style="left:13px;top:751px;" width="14" height="13" viewBox="0 0 14 13"><rect x="3.5" y="0.5" width="9.5" height="9.5" fill="none" stroke="#6E6E6E" stroke-width="1"/><path d="M1 3 V12 H10" stroke="#6E6E6E" stroke-width="1" fill="none"/></svg>
<div class="a t" style="left:35.3px;top:746.50px;font-size:13px;line-height:20px;color:#000;font-weight:400;font-family:'Liberation Sans', sans-serif;">Build completed successfully in 4 sec, 628 ms (moments ago)</div>
<div class="a t" style="left:968.7px;top:746.67px;font-size:12.5px;line-height:20px;color:#000;font-weight:400;font-family:'Liberation Sans', sans-serif;">26:1</div>
<svg class="a" style="left:1004px;top:751px;" width="12" height="11" viewBox="0 0 12 11"><path d="M1.3 4.5 V3.2 A2.2 2.2 0 0 1 5.7 3.2 V5" stroke="#6E6E6E" stroke-width="1.2" fill="none"/><rect x="3" y="5" width="8.5" height="6" fill="#6E6E6E"/></svg>
</body></html>
